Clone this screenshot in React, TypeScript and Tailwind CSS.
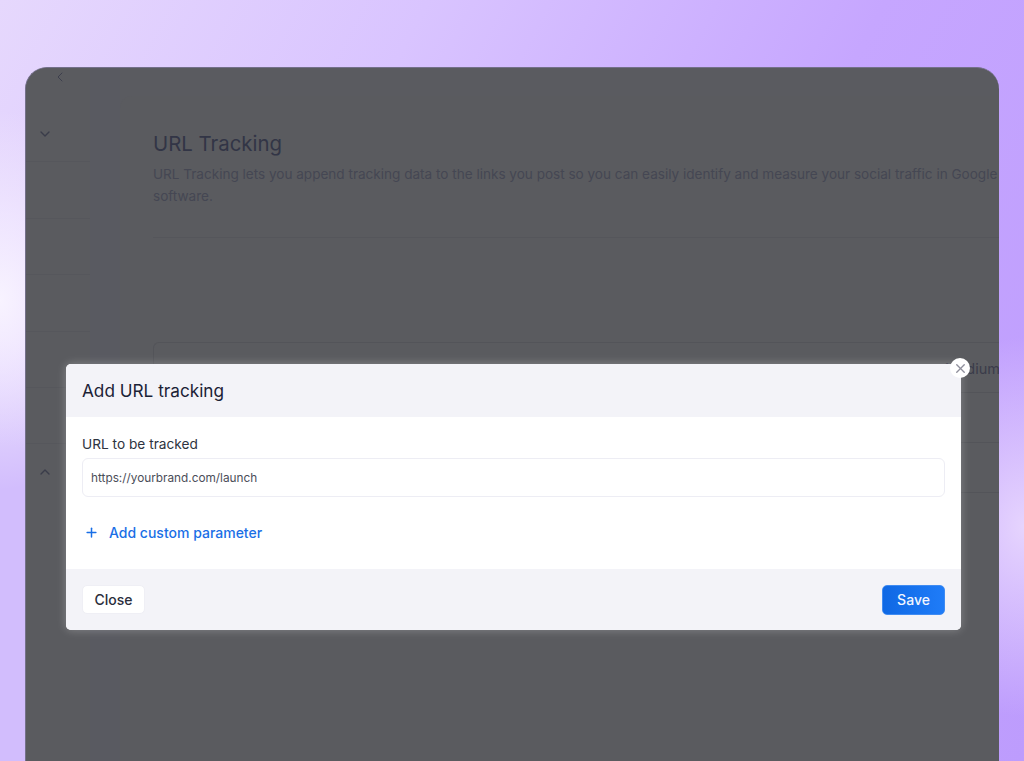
import { ChevronDown, ChevronLeft, ChevronUp, Plus, X } from "lucide-react";

const sidebarRows = [
  "h-[57px]",
  "h-[56px]",
  "h-[57px]",
  "h-[56px]",
  "h-[56px]",
];

export default function App() {
  return (
    <div
      className="relative h-[761px] w-[1024px] overflow-hidden bg-[linear-gradient(118deg,#e6d8fd_0%,#d9c4ff_30%,#c6a6ff_62%,#bd9cfd_100%)] font-['Inter',sans-serif]"
    >
      {/* glow on the left edge and the right edge */}
      <div className="pointer-events-none absolute inset-0 bg-[radial-gradient(ellipse_130px_190px_at_0px_300px,#f8f3ff_0%,#f8f3ff00_100%),radial-gradient(ellipse_130px_190px_at_1024px_527px,#e6d4fe_0%,#e6d4fe00_100%),radial-gradient(ellipse_220px_420px_at_0px_761px,#d2bdfd_75%,#d2bdfd00_100%)]" />

      <div className="relative pt-[67px] pl-[25px]">
        {/* dimmed app window */}
        <div className="flex h-[694px] w-[974px] overflow-hidden rounded-t-[22px] border-t border-l border-[#74708a] bg-[#5a5b60]">
          <aside className="w-[64px] shrink-0 bg-[#5a5b5f]">
            <div className="flex h-[18px] pl-[26px] pt-[1px]">
              <ChevronLeft className="text-[#3d3f4d]" size={16} strokeWidth={1.5} />
            </div>
            <div className="flex h-[76px] items-end border-b border-[#56575c] pb-[19px] pl-[11px]">
              <ChevronDown className="text-[#3a3c4a]" size={16} strokeWidth={2} />
            </div>
            {sidebarRows.map((h, i) => (
              <div key={i} className={`${h} border-b border-[#56575c]`} />
            ))}
            <div className="pl-[11px] pt-[20px]">
              <ChevronUp className="text-[#3a3c4a]" size={16} strokeWidth={2} />
            </div>
          </aside>

          <div className="w-[30px] shrink-0 bg-[#595a61]" />

          <main className="mt-[28px] min-w-0 flex-1 overflow-hidden rounded-tl-xl bg-[#5a5b5f] pl-[33px] pt-[33px]">
            <h1 className="text-[20.4px] leading-[30px] font-normal whitespace-nowrap text-[#323546]">URL Tracking</h1>
            <p className="mt-[4px] text-[13.55px] leading-[22px] whitespace-nowrap text-[#454753]">
              URL Tracking lets you append tracking data to the links you post so you can easily identify and measure your social traffic in Google
              <br />
              software.
            </p>
            <div className="mt-[30px] h-px w-[860px] bg-[#55565b]" />

            <div className="mt-[104px] w-[860px] rounded-tl-md border-t border-l border-[#535459]">
              <div className="flex h-[50px] items-center justify-end border-b border-[#535459] pt-[3px] text-[14.5px] text-[#3a3c4a]">
                <span className="mr-[13px]">Medium</span>
              </div>
              <div className="h-[50px] border-b border-[#535459]" />
              <div className="h-[50px] border-b border-[#535459]" />
            </div>
          </main>
        </div>
      </div>

      {/* modal */}
      <div className="absolute top-[364px] left-[66px] w-[895px] rounded-[5px] bg-white shadow-[0_0_10px_rgba(255,255,255,0.28)]">
        <div className="flex h-[53px] items-center rounded-t-[5px] bg-[#f3f3f8] px-4 pt-[1px]">
          <h2 className="text-[17.2px] font-normal text-[#1b2236]">Add URL tracking</h2>
        </div>

        <div className="h-[152px] px-4 pt-[17px]">
          <label className="block text-[13.7px] leading-[20px] text-[#2e3340]">URL to be tracked</label>
          <div className="mt-[4px] flex h-[39px] items-center rounded-md border border-[#ededf4] pl-[8px] pt-[2px]">
            <span className="text-[11.8px] text-[#4a4d58]">https://yourbrand.com/launch</span>
          </div>
          <button className="mt-[25px] flex items-center gap-[10px] pl-[2px] text-[14px] font-medium text-[#1a6fe6]">
            <Plus size={15} strokeWidth={2.4} />
            Add custom parameter
          </button>
        </div>

        <div className="flex h-[61px] items-center justify-between rounded-b-[5px] bg-[#f3f3f8] px-4">
          <button className="h-[29px] w-[63px] rounded-[5px] border border-[#efeff5] bg-white text-[14px] font-medium text-[#2b2e3b]">
            Close
          </button>
          <button className="h-[30px] w-[63px] rounded-[5px] border border-[#3f8bf2] bg-[linear-gradient(90deg,#0f68e4,#1f7cf8)] text-[14px] font-medium text-[#f2f6ff]">
            Save
          </button>
        </div>

        <div className="absolute -top-[6px] -right-[9px] flex h-[20px] w-[20px] items-center justify-center rounded-full bg-white">
          <X className="text-[#8f8f9c]" size={15} strokeWidth={2.2} />
        </div>
      </div>
    </div>
  );
}
